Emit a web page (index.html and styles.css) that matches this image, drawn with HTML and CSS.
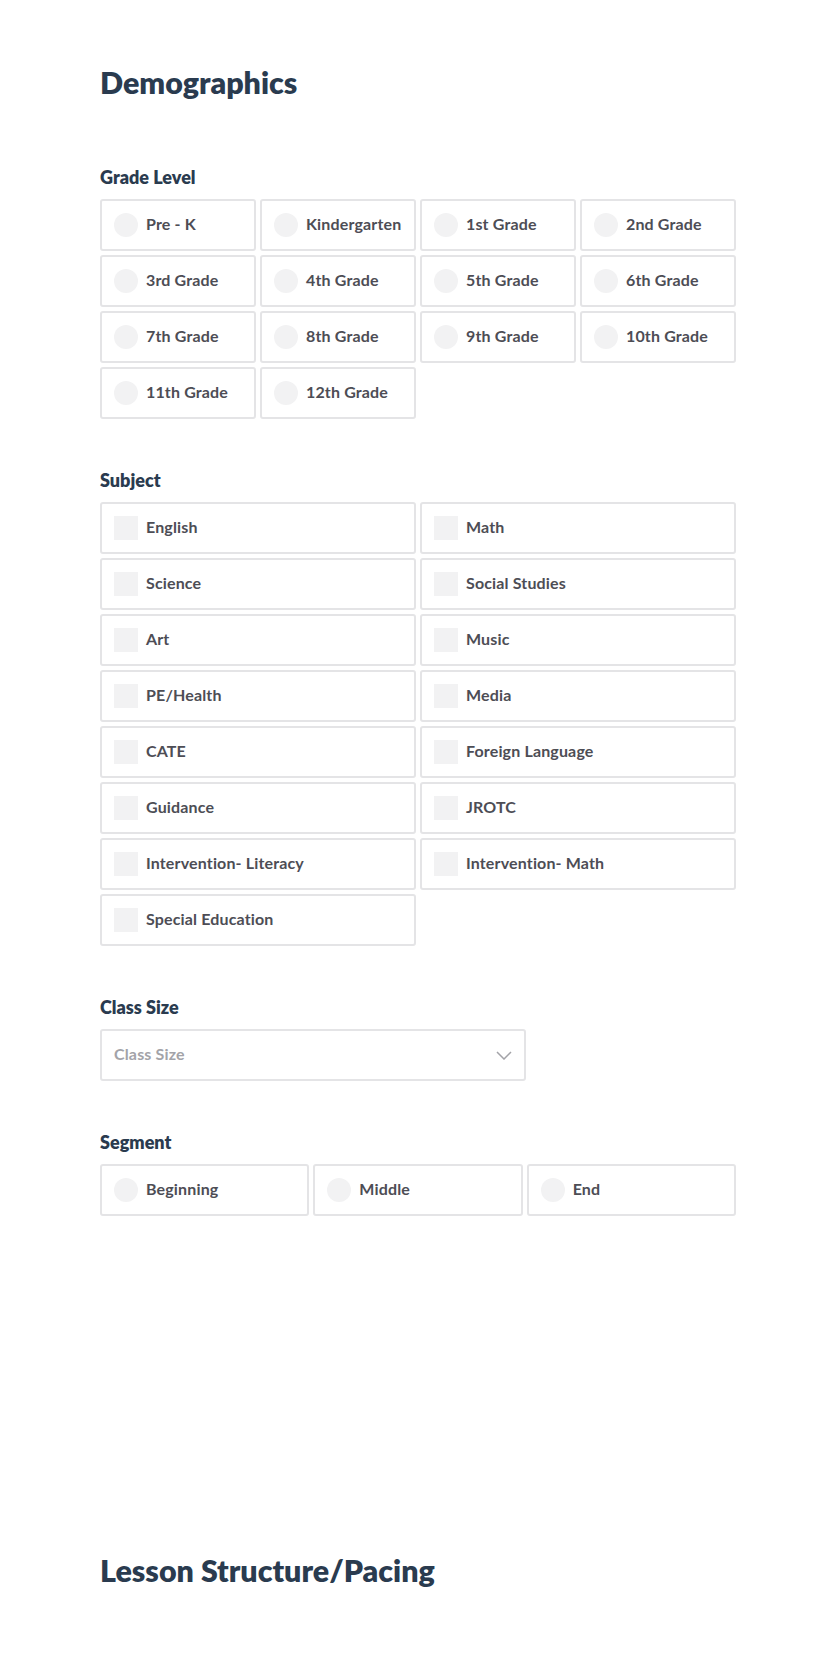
FILE: index.html
```html
<!DOCTYPE html>
<html>
<head>
<meta charset="utf-8">
<link rel="stylesheet" href="styles.css">
</head>
<body>
<main class="page">
  <section class="section">
    <h1 class="title">Demographics</h1>

    <div class="field field-first">
      <h2 class="label">Grade Level</h2>
      <div class="grid grid-4">
        <div class="option"><span class="radio"></span><span class="text">Pre - K</span></div>
        <div class="option"><span class="radio"></span><span class="text">Kindergarten</span></div>
        <div class="option"><span class="radio"></span><span class="text">1st Grade</span></div>
        <div class="option"><span class="radio"></span><span class="text">2nd Grade</span></div>
        <div class="option"><span class="radio"></span><span class="text">3rd Grade</span></div>
        <div class="option"><span class="radio"></span><span class="text">4th Grade</span></div>
        <div class="option"><span class="radio"></span><span class="text">5th Grade</span></div>
        <div class="option"><span class="radio"></span><span class="text">6th Grade</span></div>
        <div class="option"><span class="radio"></span><span class="text">7th Grade</span></div>
        <div class="option"><span class="radio"></span><span class="text">8th Grade</span></div>
        <div class="option"><span class="radio"></span><span class="text">9th Grade</span></div>
        <div class="option"><span class="radio"></span><span class="text">10th Grade</span></div>
        <div class="option"><span class="radio"></span><span class="text">11th Grade</span></div>
        <div class="option"><span class="radio"></span><span class="text">12th Grade</span></div>
      </div>
    </div>

    <div class="field">
      <h2 class="label">Subject</h2>
      <div class="grid grid-2">
        <div class="option"><span class="check"></span><span class="text">English</span></div>
        <div class="option"><span class="check"></span><span class="text">Math</span></div>
        <div class="option"><span class="check"></span><span class="text">Science</span></div>
        <div class="option"><span class="check"></span><span class="text">Social Studies</span></div>
        <div class="option"><span class="check"></span><span class="text">Art</span></div>
        <div class="option"><span class="check"></span><span class="text">Music</span></div>
        <div class="option"><span class="check"></span><span class="text">PE/Health</span></div>
        <div class="option"><span class="check"></span><span class="text">Media</span></div>
        <div class="option"><span class="check"></span><span class="text">CATE</span></div>
        <div class="option"><span class="check"></span><span class="text">Foreign Language</span></div>
        <div class="option"><span class="check"></span><span class="text">Guidance</span></div>
        <div class="option"><span class="check"></span><span class="text">JROTC</span></div>
        <div class="option"><span class="check"></span><span class="text">Intervention- Literacy</span></div>
        <div class="option"><span class="check"></span><span class="text">Intervention- Math</span></div>
        <div class="option"><span class="check"></span><span class="text">Special Education</span></div>
      </div>
    </div>

    <div class="field">
      <h2 class="label">Class Size</h2>
      <div class="select">
        <span class="placeholder">Class Size</span>
        <svg class="chevron" width="16" height="9" viewBox="0 0 16 9"><path d="M1 1 L8 8 L15 1" fill="none" stroke="#a3a3a8" stroke-width="1.5"/></svg>
      </div>
    </div>

    <div class="field">
      <h2 class="label">Segment</h2>
      <div class="grid grid-3">
        <div class="option"><span class="radio"></span><span class="text">Beginning</span></div>
        <div class="option"><span class="radio"></span><span class="text">Middle</span></div>
        <div class="option"><span class="radio"></span><span class="text">End</span></div>
      </div>
    </div>
  </section>

  <section class="section section-next">
    <h1 class="title">Lesson Structure/Pacing</h1>
  </section>
</main>
</body>
</html>
```

FILE: styles.css
```css
* { box-sizing: border-box; }

html, body {
  margin: 0;
  padding: 0;
  background: #ffffff;
}

body {
  font-family: Lato, "Open Sans", "Liberation Sans", sans-serif;
  color: #2a3b4f;
}

.page {
  width: 636px;
  margin-left: 100px;
  padding-top: 62px;
}

.title {
  margin: 0;
  font-size: 30.4px;
  line-height: 40px;
  font-weight: 800;
  color: #2a3b4f;
}

.field {
  margin-top: 50px;
}

.field-first {
  margin-top: 64px;
}

.label {
  margin: 0 0 11px 0;
  font-size: 18px;
  line-height: 22px;
  font-weight: 800;
  color: #2a3b4f;
}

.grid {
  display: grid;
  gap: 4px;
}

.grid-4 { grid-template-columns: repeat(4, 1fr); }
.grid-2 { grid-template-columns: repeat(2, 1fr); }
.grid-3 { grid-template-columns: repeat(3, 1fr); }

.option {
  display: flex;
  align-items: center;
  height: 52px;
  padding: 0 12px;
  border: 2px solid #e4e4e6;
  border-radius: 3px;
  background: #fff;
}

.radio {
  flex: none;
  width: 24px;
  height: 24px;
  border-radius: 50%;
  background: #f2f2f3;
}

.check {
  flex: none;
  width: 24px;
  height: 24px;
  background: #f2f2f3;
}

.text {
  margin-left: 8px;
  padding-bottom: 2px;
  font-size: 16px;
  line-height: 20px;
  font-weight: 700;
  letter-spacing: 0.15px;
  color: #4d4d55;
  white-space: nowrap;
}

.select {
  display: flex;
  align-items: center;
  justify-content: space-between;
  width: 426px;
  height: 52px;
  padding: 0 12px 0 12px;
  border: 2px solid #e4e4e6;
  border-radius: 3px;
}

.placeholder {
  padding-bottom: 2px;
  font-size: 16px;
  line-height: 20px;
  font-weight: 700;
  letter-spacing: 0.15px;
  color: #a3a3a8;
}

.chevron {
  margin-right: 0;
}

.section-next {
  margin-top: 334px;
}
```
